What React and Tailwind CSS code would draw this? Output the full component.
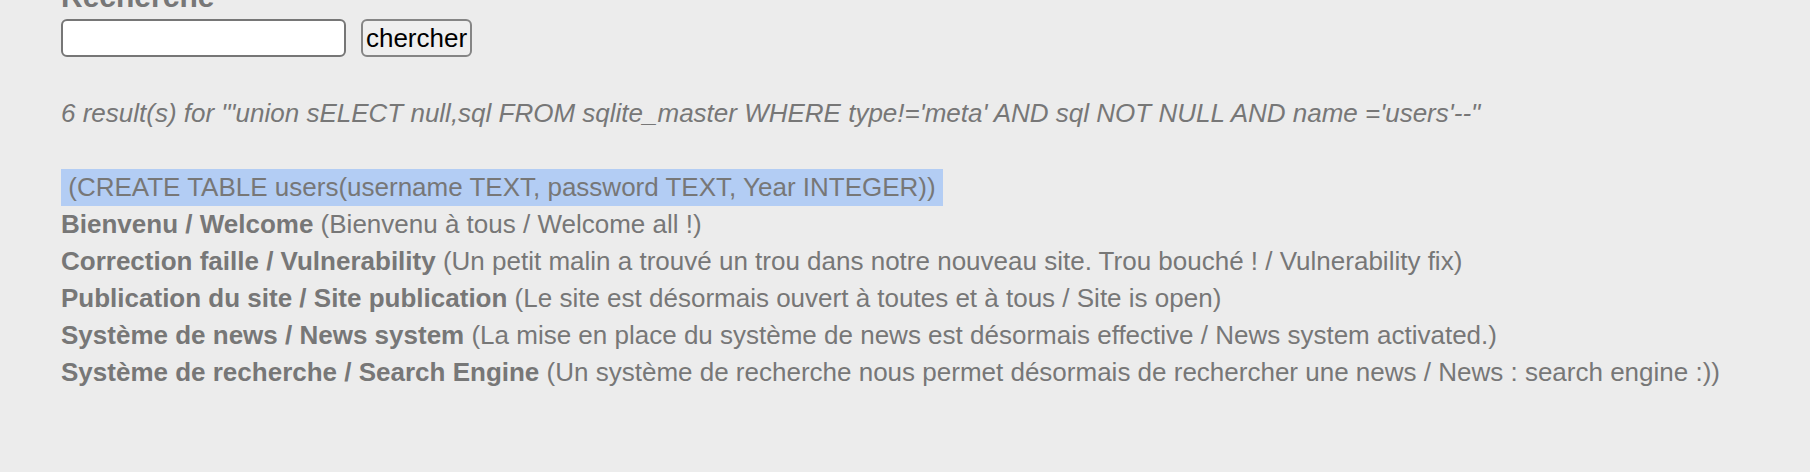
export default function App() {
  const news = [
    ['Bienvenu / Welcome', 'Bienvenu à tous / Welcome all !'],
    ['Correction faille / Vulnerability', 'Un petit malin a trouvé un trou dans notre nouveau site. Trou bouché ! / Vulnerability fix'],
    ['Publication du site / Site publication', 'Le site est désormais ouvert à toutes et à tous / Site is open'],
    ['Système de news / News system', 'La mise en place du système de news est désormais effective / News system activated.'],
    ['Système de recherche / Search Engine', 'Un système de recherche nous permet désormais de rechercher une news / News : search engine :)'],
  ];

  return (
    <div className="flex h-[472px] w-full flex-col overflow-hidden bg-[#ececec] pl-[61px] font-['Liberation_Sans',Arial,sans-serif] text-[26px] leading-[37px] text-[#777]">
      {/* Heading (cut off at the top) */}
      <h3 className="-mt-[21px] text-[30px] font-bold leading-[35px]">Recherche</h3>

      {/* Search form */}
      <div className="mt-[5px] flex items-center gap-[15px]">
        <input
          type="text"
          className="h-[38px] w-[285px] rounded-[6px] border-2 border-[#767676] bg-white px-2 outline-none"
        />
        <button className="h-[38px] w-[111px] rounded-[6px] border-2 border-[#858585] bg-[#efefef] text-[26px] leading-none text-black">
          chercher
        </button>
      </div>

      {/* Results */}
      <p className="mt-[38px] italic">
        6 result(s) for "'union sELECT null,sql FROM sqlite_master WHERE type!='meta' AND sql NOT NULL AND name ='users'--"
      </p>
      <div className="h-[37px]"></div>

      <div className="w-fit whitespace-pre bg-[#b3cdf4]"> (CREATE TABLE users(username TEXT, password TEXT, Year INTEGER)) </div>

      {news.map(([title, text], i) => (
        <div key={i}>
          <b>{title}</b> ({text})
        </div>
      ))}
    </div>
  );
}
